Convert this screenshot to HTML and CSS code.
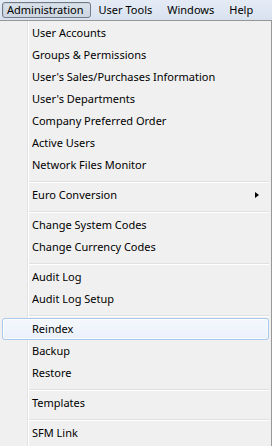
FILE: index.html
```html
<!DOCTYPE html>
<html>
<head>
<meta charset="utf-8">
<link rel="stylesheet" href="styles.css">
</head>
<body>
<div class="menubar">
  <div class="top active">Administration</div>
  <div class="top">User Tools</div>
  <div class="top">Windows</div>
  <div class="top">Help</div>
</div>
<div class="dropdown">
  <div class="item">User Accounts</div>
  <div class="item">Groups &amp; Permissions</div>
  <div class="item">User's Sales/Purchases Information</div>
  <div class="item">User's Departments</div>
  <div class="item">Company Preferred Order</div>
  <div class="item">Active Users</div>
  <div class="item">Network Files Monitor</div>
  <div class="sep"></div>
  <div class="item sub">Euro Conversion<span class="arrow"></span></div>
  <div class="sep"></div>
  <div class="item">Change System Codes</div>
  <div class="item">Change Currency Codes</div>
  <div class="sep"></div>
  <div class="item">Audit Log</div>
  <div class="item">Audit Log Setup</div>
  <div class="sep"></div>
  <div class="item hover">Reindex</div>
  <div class="item">Backup</div>
  <div class="item">Restore</div>
  <div class="sep"></div>
  <div class="item">Templates</div>
  <div class="sep"></div>
  <div class="item">SFM Link</div>
</div>
</body>
</html>
```
FILE: styles.css
```css
html, body {
  margin: 0;
  padding: 0;
}
body {
  width: 272px;
  height: 446px;
  overflow: hidden;
  background: #ffffff;
  font-family: "Noto Sans", "Open Sans", sans-serif;
  font-size: 11px;
  color: #000;
}
.menubar {
  height: 20px;
  box-sizing: border-box;
  display: flex;
  align-items: flex-start;
  padding: 2px 0 0 2px;
  background: linear-gradient(#e4ebf5, #d8e2ef);
}
.top {
  height: 16px;
  line-height: 14px;
  padding: 0 6.5px;
  box-sizing: border-box;
  border: 1px solid transparent;
  white-space: nowrap;
}
.top.active {
  border-color: #707c8a;
  border-radius: 3px;
  background: linear-gradient(#d9e1ea, #cdd6e1);
  box-shadow: inset 1px 1px 0 rgba(0,0,0,0.06);
  padding: 0 6.5px 0 4px;
}
.dropdown {
  margin-left: -1px;
  width: 273px;
  height: 426px;
  box-sizing: border-box;
  border: 1px solid #979797;
  border-bottom: none;
  padding: 1px 2px 0 2px;
  background-color: #f0f0f0;
  background-image: linear-gradient(90deg, transparent 27px, #e2e3e3 27px, #e2e3e3 28px, #ffffff 28px, #ffffff 29px, transparent 29px);
}
.item {
  position: relative;
  height: 22px;
  line-height: 22px;
  padding-left: 30px;
  box-sizing: border-box;
  white-space: nowrap;
}
.item.hover {
  border: 1px solid #a8c8ec;
  border-radius: 3px;
  line-height: 20px;
  padding-left: 29px;
  background: linear-gradient(#f4f8fd, #eaf1fb);
  box-shadow: inset 0 0 0 1px rgba(255,255,255,0.7);
}
.sep {
  height: 8px;
  margin-left: 27px;
  background: linear-gradient(transparent 5px, #e0e0e0 5px, #e0e0e0 6px, #ffffff 6px, #ffffff 7px, transparent 7px);
}
.arrow {
  position: absolute;
  right: 10px;
  top: 8px;
  width: 0;
  height: 0;
  border-top: 3.5px solid transparent;
  border-bottom: 3.5px solid transparent;
  border-left: 4px solid #000;
}
```
